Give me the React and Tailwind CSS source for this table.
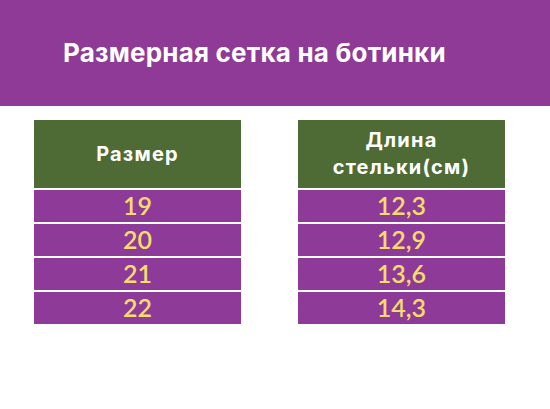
const sizes = ["19", "20", "21", "22"];
const lengths = ["12,3", "12,9", "13,6", "14,3"];

function Column({ title, values }) {
  return (
    <div className="flex w-[207px] flex-col gap-[2px]">
      <div className="flex h-[68px] items-center justify-center bg-[#4e6b35] px-2 text-center text-[20px] font-bold leading-[27px] tracking-[1.2px] text-white">
        {title}
      </div>
      {values.map((v) => (
        <div
          key={v}
          className="flex h-[32px] items-center justify-center bg-[#8e3a98] text-[25px] font-semibold text-[#f6dc6c] [font-family:'Lato',sans-serif]"
        >
          {v}
        </div>
      ))}
    </div>
  );
}

export default function App() {
  return (
    <div className="h-[409px] w-[550px] bg-white [font-family:'Inter',sans-serif]">
      <div className="flex h-[106px] items-center bg-[#8e3a96] pl-[63px] pb-[2px]">
        <h1 className="text-[26px] font-bold tracking-[0.2px] text-white">
          Размерная сетка на ботинки
        </h1>
      </div>
      <div className="flex gap-[57px] pl-[34px] pt-[14px]">
        <Column title="Размер" values={sizes} />
        <Column
          title={
            <span>
              Длина
              <br />
              стельки(см)
            </span>
          }
          values={lengths}
        />
      </div>
    </div>
  );
}
